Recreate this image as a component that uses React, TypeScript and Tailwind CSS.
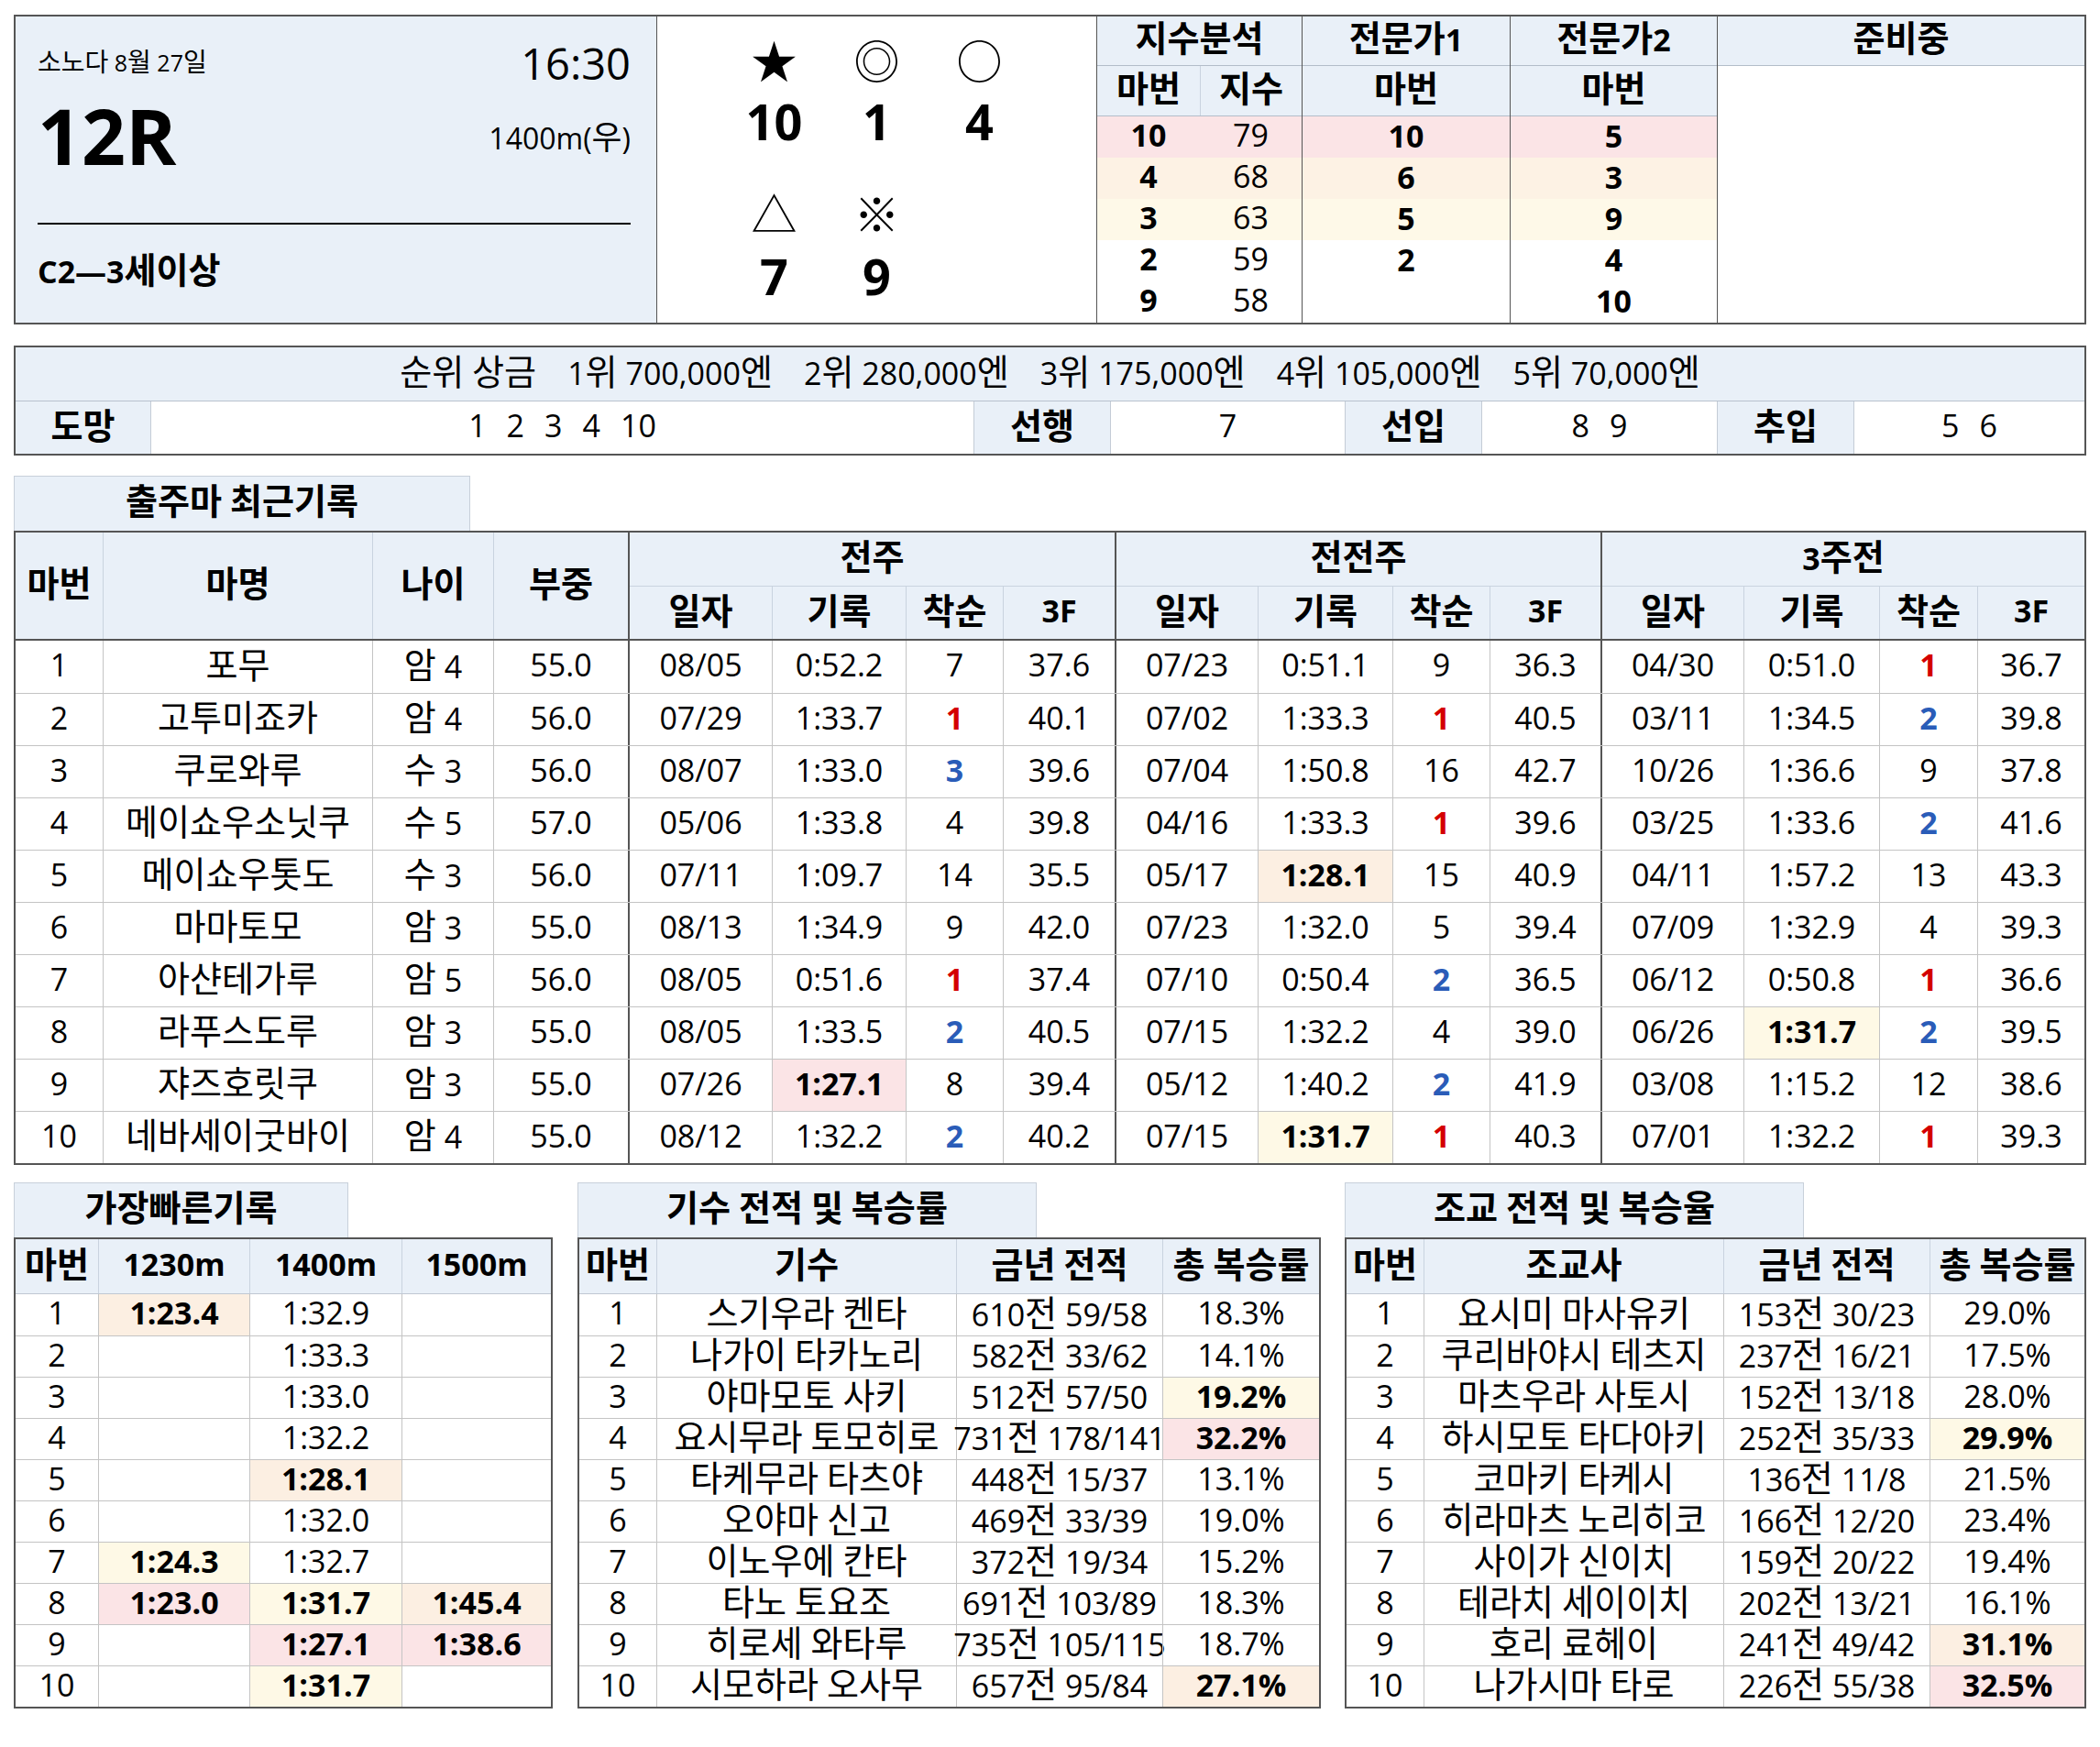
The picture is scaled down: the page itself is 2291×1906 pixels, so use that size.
import React from "react";

type Hl = "" | "p" | "o" | "y";
const hl = (h?: Hl) =>
  h === "p" ? "bg-[#fbe4e6] font-bold" : h === "o" ? "bg-[#fcefe2] font-bold" : h === "y" ? "bg-[#fef9e6] font-bold" : "";

const HDR = "bg-[#e9f0f8]";

// Hangul runs are rendered slightly larger, as in the reference font
function K({ t }: { t: string }) {
  const parts = t.split(/([\uAC00-\uD7A3\u3131-\u318E]+)/);
  return (
    <span className="whitespace-pre leading-none">
      {parts.map((p, i) =>
        i % 2 === 1 ? (
          <span key={i} className="text-[1.12em]">
            {p}
          </span>
        ) : (
          <React.Fragment key={i}>{p}</React.Fragment>
        )
      )}
    </span>
  );
}

type Race = { d: string; t: string; h?: Hl; r: string; f: string };
type Horse = { no: string; name: string; age: string; wt: string; races: Race[] };

const horses: Horse[] = [
  { no: "1", name: "포무", age: "암 4", wt: "55.0", races: [
    { d: "08/05", t: "0:52.2", r: "7", f: "37.6" },
    { d: "07/23", t: "0:51.1", r: "9", f: "36.3" },
    { d: "04/30", t: "0:51.0", r: "1", f: "36.7" } ] },
  { no: "2", name: "고투미죠카", age: "암 4", wt: "56.0", races: [
    { d: "07/29", t: "1:33.7", r: "1", f: "40.1" },
    { d: "07/02", t: "1:33.3", r: "1", f: "40.5" },
    { d: "03/11", t: "1:34.5", r: "2", f: "39.8" } ] },
  { no: "3", name: "쿠로와루", age: "수 3", wt: "56.0", races: [
    { d: "08/07", t: "1:33.0", r: "3", f: "39.6" },
    { d: "07/04", t: "1:50.8", r: "16", f: "42.7" },
    { d: "10/26", t: "1:36.6", r: "9", f: "37.8" } ] },
  { no: "4", name: "메이쇼우소닛쿠", age: "수 5", wt: "57.0", races: [
    { d: "05/06", t: "1:33.8", r: "4", f: "39.8" },
    { d: "04/16", t: "1:33.3", r: "1", f: "39.6" },
    { d: "03/25", t: "1:33.6", r: "2", f: "41.6" } ] },
  { no: "5", name: "메이쇼우톳도", age: "수 3", wt: "56.0", races: [
    { d: "07/11", t: "1:09.7", r: "14", f: "35.5" },
    { d: "05/17", t: "1:28.1", h: "o", r: "15", f: "40.9" },
    { d: "04/11", t: "1:57.2", r: "13", f: "43.3" } ] },
  { no: "6", name: "마마토모", age: "암 3", wt: "55.0", races: [
    { d: "08/13", t: "1:34.9", r: "9", f: "42.0" },
    { d: "07/23", t: "1:32.0", r: "5", f: "39.4" },
    { d: "07/09", t: "1:32.9", r: "4", f: "39.3" } ] },
  { no: "7", name: "아샨테가루", age: "암 5", wt: "56.0", races: [
    { d: "08/05", t: "0:51.6", r: "1", f: "37.4" },
    { d: "07/10", t: "0:50.4", r: "2", f: "36.5" },
    { d: "06/12", t: "0:50.8", r: "1", f: "36.6" } ] },
  { no: "8", name: "라푸스도루", age: "암 3", wt: "55.0", races: [
    { d: "08/05", t: "1:33.5", r: "2", f: "40.5" },
    { d: "07/15", t: "1:32.2", r: "4", f: "39.0" },
    { d: "06/26", t: "1:31.7", h: "y", r: "2", f: "39.5" } ] },
  { no: "9", name: "쟈즈호릿쿠", age: "암 3", wt: "55.0", races: [
    { d: "07/26", t: "1:27.1", h: "p", r: "8", f: "39.4" },
    { d: "05/12", t: "1:40.2", r: "2", f: "41.9" },
    { d: "03/08", t: "1:15.2", r: "12", f: "38.6" } ] },
  { no: "10", name: "네바세이굿바이", age: "암 4", wt: "55.0", races: [
    { d: "08/12", t: "1:32.2", r: "2", f: "40.2" },
    { d: "07/15", t: "1:31.7", h: "y", r: "1", f: "40.3" },
    { d: "07/01", t: "1:32.2", r: "1", f: "39.3" } ] },
];

const groupW = [
  ["w-[157px]", "w-[146px]", "w-[106px]", "w-[122px]"],
  ["w-[156px]", "w-[147px]", "w-[106px]", "w-[121px]"],
  ["w-[156px]", "w-[148px]", "w-[107px]", "flex-1"],
];
const groupHeadW = ["w-[531px]", "w-[530px]", "flex-1"];
const groupSubW = [
  ["w-[155px]", "w-[146px]", "w-[106px]", "flex-1"],
  ["w-[154px]", "w-[147px]", "w-[106px]", "flex-1"],
  ["w-[154px]", "w-[148px]", "w-[107px]", "flex-1"],
];
const groupNames = ["전주", "전전주", "3주전"];

const rankCls = (r: string) =>
  r === "1" ? "text-[#d40000] font-bold" : r === "2" || r === "3" ? "text-[#2a5cb8] font-bold" : "";

const fastest: [string, Hl, string, Hl, string, Hl][] = [
  ["1:23.4", "o", "1:32.9", "", "", ""],
  ["", "", "1:33.3", "", "", ""],
  ["", "", "1:33.0", "", "", ""],
  ["", "", "1:32.2", "", "", ""],
  ["", "", "1:28.1", "o", "", ""],
  ["", "", "1:32.0", "", "", ""],
  ["1:24.3", "y", "1:32.7", "", "", ""],
  ["1:23.0", "p", "1:31.7", "y", "1:45.4", "o"],
  ["", "", "1:27.1", "p", "1:38.6", "p"],
  ["", "", "1:31.7", "y", "", ""],
];

const jockeys: [string, string, string, Hl][] = [
  ["스기우라 켄타", "610전 59/58", "18.3%", ""],
  ["나가이 타카노리", "582전 33/62", "14.1%", ""],
  ["야마모토 사키", "512전 57/50", "19.2%", "y"],
  ["요시무라 토모히로", "731전 178/141", "32.2%", "p"],
  ["타케무라 타츠야", "448전 15/37", "13.1%", ""],
  ["오야마 신고", "469전 33/39", "19.0%", ""],
  ["이노우에 칸타", "372전 19/34", "15.2%", ""],
  ["타노 토요조", "691전 103/89", "18.3%", ""],
  ["히로세 와타루", "735전 105/115", "18.7%", ""],
  ["시모하라 오사무", "657전 95/84", "27.1%", "o"],
];

const trainers: [string, string, string, Hl][] = [
  ["요시미 마사유키", "153전 30/23", "29.0%", ""],
  ["쿠리바야시 테츠지", "237전 16/21", "17.5%", ""],
  ["마츠우라 사토시", "152전 13/18", "28.0%", ""],
  ["하시모토 타다아키", "252전 35/33", "29.9%", "y"],
  ["코마키 타케시", "136전 11/8", "21.5%", ""],
  ["히라마츠 노리히코", "166전 12/20", "23.4%", ""],
  ["사이가 신이치", "159전 20/22", "19.4%", ""],
  ["테라치 세이이치", "202전 13/21", "16.1%", ""],
  ["호리 료헤이", "241전 49/42", "31.1%", "o"],
  ["나가시마 타로", "226전 55/38", "32.5%", "p"],
];

const idxRows: { a: string; b: string; c: string; d: string; bg: string }[] = [
  { a: "10", b: "79", c: "10", d: "5", bg: "bg-[#fbe4e6]" },
  { a: "4", b: "68", c: "6", d: "3", bg: "bg-[#fdf2e4]" },
  { a: "3", b: "63", c: "5", d: "9", bg: "bg-[#fef9e8]" },
  { a: "2", b: "59", c: "2", d: "4", bg: "" },
  { a: "9", b: "58", c: "", d: "10", bg: "" },
];

function Cell({ w, cls = "", children }: { w: string; cls?: string; children?: React.ReactNode }) {
  return (
    <div className={`${w} shrink-0 h-full flex items-center justify-center whitespace-nowrap pb-[5px] ${cls}`}>
      {typeof children === "string" ? <K t={children} /> : children}
    </div>
  );
}

function Head({ cls, children }: { cls: string; children: string }) {
  return (
    <div className={`${cls} flex items-center justify-center font-bold whitespace-nowrap pb-[6px]`}>
      <K t={children} />
    </div>
  );
}

function Num({ cls, children }: { cls: string; children: string }) {
  return (
    <div className={`${cls} flex items-center justify-center font-bold leading-none pb-[4px]`}>{children}</div>
  );
}

function TopBox() {
  return (
    <div className="mt-[16px] flex h-[338px] border-2 border-[#555]">
      {/* left info */}
      <div className={`w-[700px] shrink-0 border-r border-[#555] ${HDR} pl-[24px] pr-[28px] pt-[21px] flex flex-col`}>
        <div className="h-[60px] flex items-center justify-between">
          <span className="text-[25px]"><K t="소노다 8월 27일" /></span>
          <span className="text-[47px] leading-none">16:30</span>
        </div>
        <div className="h-[98px] flex items-center justify-between">
          <span className="text-[84px] font-bold leading-none">12R</span>
          <span className="text-[32px] leading-none pt-[4px]"><K t="1400m(우)" /></span>
        </div>
        <div className="mt-[46px] h-[2px] bg-black" />
        <div className="flex-1 flex items-center pb-[4px]">
          <span className="text-[34px] font-bold"><K t="C2—3세이상" /></span>
        </div>
      </div>
      {/* marks */}
      <div className="w-[480px] shrink-0 border-r border-[#555] flex flex-col items-center pt-[21px]">
        <div className="grid grid-cols-[112px_112px_112px] h-[56px] text-[50px] leading-none items-center justify-items-center">
          <span>★</span>
          <span>◎</span>
          <span>○</span>
        </div>
        <div className="mt-[5px] grid grid-cols-[112px_112px_112px] h-[64px] text-[54px] font-bold leading-none items-center justify-items-center">
          <span>10</span>
          <span>1</span>
          <span>4</span>
        </div>
        <div className="mt-[42px] grid grid-cols-[112px_112px_112px] h-[56px] text-[50px] leading-none items-center justify-items-center">
          <span>△</span>
          <span>※</span>
          <span />
        </div>
        <div className="mt-[7px] grid grid-cols-[112px_112px_112px] h-[64px] text-[54px] font-bold leading-none items-center justify-items-center">
          <span>7</span>
          <span>9</span>
          <span />
        </div>
      </div>
      {/* 지수분석 */}
      <div className="w-[224px] shrink-0 border-r border-[#555] flex flex-col text-[34px]">
        <Head cls={`h-[54px] ${HDR} border-b border-[#b3bdc9]`}>지수분석</Head>
        <div className={`h-[55px] ${HDR} border-b border-[#b3bdc9] flex font-bold`}>
          <Cell w="w-[112px]">마번</Cell>
          <Cell w="flex-1" cls="border-l border-[#c9d3df]">지수</Cell>
        </div>
        {idxRows.map((r, i) => (
          <div key={i} className={`h-[45px] flex ${r.bg}`}>
            <Cell w="w-[112px]" cls="font-bold">{r.a}</Cell>
            <Cell w="flex-1">{r.b}</Cell>
          </div>
        ))}
      </div>
      {/* 전문가1 */}
      <div className="w-[227px] shrink-0 border-r border-[#555] flex flex-col text-[34px]">
        <Head cls={`h-[54px] ${HDR} border-b border-[#b3bdc9]`}>전문가1</Head>
        <Head cls={`h-[55px] ${HDR} border-b border-[#b3bdc9]`}>마번</Head>
        {idxRows.map((r, i) => (
          <Num key={i} cls={`h-[45px] ${r.bg}`}>{r.c}</Num>
        ))}
      </div>
      {/* 전문가2 */}
      <div className="w-[226px] shrink-0 border-r border-[#555] flex flex-col text-[34px]">
        <Head cls={`h-[54px] ${HDR} border-b border-[#b3bdc9]`}>전문가2</Head>
        <Head cls={`h-[55px] ${HDR} border-b border-[#b3bdc9]`}>마번</Head>
        {idxRows.map((r, i) => (
          <Num key={i} cls={`h-[45px] ${r.bg}`}>{r.d}</Num>
        ))}
      </div>
      {/* 준비중 */}
      <div className="flex-1 flex flex-col text-[34px]">
        <Head cls={`h-[54px] ${HDR} border-b border-[#b3bdc9]`}>준비중</Head>
        <div className="flex-1 bg-white" />
      </div>
    </div>
  );
}

function PrizeBox() {
  const prizes = ["1위 700,000엔", "2위 280,000엔", "3위 175,000엔", "4위 105,000엔", "5위 70,000엔"];
  const nums = (arr: string[]) => (
    <div className="flex gap-[22px] leading-none">
      {arr.map((n, i) => (
        <span key={i}>{n}</span>
      ))}
    </div>
  );
  return (
    <div className="mt-[23px] h-[120px] border-2 border-[#555] flex flex-col text-[34px]">
      <div className={`h-[59px] ${HDR} border-b border-[#b8c2ce] flex items-center justify-center gap-[34px] whitespace-nowrap pb-[5px]`}>
        <K t="순위 상금" />
        {prizes.map((p) => (
          <K key={p} t={p} />
        ))}
      </div>
      <div className="flex-1 flex">
        <Cell w="w-[147px]" cls={`${HDR} font-bold`}>도망</Cell>
        <Cell w="w-[898px]" cls="border-l border-[#c4ccd6]">{nums(["1", "2", "3", "4", "10"])}</Cell>
        <Cell w="w-[149px]" cls={`${HDR} font-bold border-l border-[#c4ccd6]`}>선행</Cell>
        <Cell w="w-[256px]" cls="border-l border-[#c4ccd6]">{nums(["7"])}</Cell>
        <Cell w="w-[149px]" cls={`${HDR} font-bold border-l border-[#c4ccd6]`}>선입</Cell>
        <Cell w="w-[257px]" cls="border-l border-[#c4ccd6]">{nums(["8", "9"])}</Cell>
        <Cell w="w-[149px]" cls={`${HDR} font-bold border-l border-[#c4ccd6]`}>추입</Cell>
        <Cell w="flex-1" cls="border-l border-[#c4ccd6]">{nums(["5", "6"])}</Cell>
      </div>
    </div>
  );
}

function Tab({ w, children, mt }: { w: string; children: string; mt: string }) {
  return (
    <div className={`${w} ${mt} h-[60px] ${HDR} border-t border-x border-[#c8d0da] flex items-center justify-center font-bold text-[34px] whitespace-nowrap pb-[6px]`}>
      <K t={children} />
    </div>
  );
}

function MainTable() {
  const HL = "border-l border-[#c9d3df]";
  const DL = "border-l border-[#c4c4c4]";
  return (
    <div className="border-2 border-[#555] text-[34px]">
      <div className={`flex h-[118px] border-b-2 border-[#555] ${HDR} font-bold`}>
        <Cell w="w-[95px]">마번</Cell>
        <Cell w="w-[294px]" cls={HL}>마명</Cell>
        <Cell w="w-[132px]" cls={HL}>나이</Cell>
        <Cell w="w-[147px]" cls={HL}>부중</Cell>
        {groupNames.map((g, gi) => (
          <div key={g} className={`${groupHeadW[gi]} shrink-0 border-l-2 border-[#555] flex flex-col`}>
            <Head cls="h-[58px]">{g}</Head>
            <div className="flex-1 flex border-t border-[#c9d3df]">
              {["일자", "기록", "착순", "3F"].map((s, si) => (
                <Cell key={s} w={groupSubW[gi][si]} cls={si > 0 ? HL : ""}>{s}</Cell>
              ))}
            </div>
          </div>
        ))}
      </div>
      {horses.map((h, i) => (
        <div key={h.no} className={`flex h-[57px] ${i > 0 ? "border-t border-[#c4c4c4]" : ""}`}>
          <Cell w="w-[95px]">{h.no}</Cell>
          <Cell w="w-[294px]" cls={DL}>{h.name}</Cell>
          <Cell w="w-[132px]" cls={DL}>{h.age}</Cell>
          <Cell w="w-[147px]" cls={DL}>{h.wt}</Cell>
          {h.races.map((r, gi) => (
            <React.Fragment key={gi}>
              <Cell w={groupW[gi][0]} cls="border-l-2 border-[#555]">{r.d}</Cell>
              <Cell w={groupW[gi][1]} cls={`${DL} ${hl(r.h)}`}>{r.t}</Cell>
              <Cell w={groupW[gi][2]} cls={`${DL} ${rankCls(r.r)}`}>{r.r}</Cell>
              <Cell w={groupW[gi][3]} cls={DL}>{r.f}</Cell>
            </React.Fragment>
          ))}
        </div>
      ))}
    </div>
  );
}

function SmallTable({ widths, heads, rows }: { widths: string[]; heads: string[]; rows: { v: string; h?: Hl }[][] }) {
  return (
    <div className="border-2 border-[#555] text-[34px]">
      <div className={`flex h-[60px] ${HDR} border-b border-[#c0c8d2] font-bold`}>
        {heads.map((h, i) => (
          <Cell key={h} w={widths[i]} cls={i > 0 ? "border-l border-[#c9d3df]" : ""}>{h}</Cell>
        ))}
      </div>
      {rows.map((r, ri) => (
        <div key={ri} className={`flex h-[45px] ${ri > 0 ? "border-t border-[#c4c4c4]" : ""}`}>
          {r.map((c, ci) => (
            <Cell key={ci} w={widths[ci]} cls={`${ci > 0 ? "border-l border-[#c4c4c4]" : ""} ${hl(c.h)}`}>{c.v}</Cell>
          ))}
        </div>
      ))}
    </div>
  );
}

export default function App() {
  return (
    <div className="w-[2291px] h-[1906px] bg-white text-black px-[15px] font-['Open_Sans','Noto_Sans_CJK_KR',sans-serif]">
      <TopBox />
      <PrizeBox />
      <Tab w="w-[498px]" mt="mt-[22px]">출주마 최근기록</Tab>
      <MainTable />
      <div className="mt-[19px] flex items-start">
        <div className="w-[588px] shrink-0">
          <Tab w="w-[365px]" mt="mt-0">가장빠른기록</Tab>
          <SmallTable
            widths={["w-[90px]", "w-[165px]", "w-[166px]", "flex-1"]}
            heads={["마번", "1230m", "1400m", "1500m"]}
            rows={fastest.map((f, i) => [
              { v: String(i + 1) },
              { v: f[0], h: f[1] },
              { v: f[2], h: f[3] },
              { v: f[4], h: f[5] },
            ])}
          />
        </div>
        <div className="ml-[27px] w-[811px] shrink-0">
          <Tab w="w-[501px]" mt="mt-0">기수 전적 및 복승률</Tab>
          <SmallTable
            widths={["w-[84px]", "w-[327px]", "w-[225px]", "flex-1"]}
            heads={["마번", "기수", "금년 전적", "총 복승률"]}
            rows={jockeys.map((j, i) => [{ v: String(i + 1) }, { v: j[0] }, { v: j[1] }, { v: j[2], h: j[3] }])}
          />
        </div>
        <div className="ml-[26px] w-[809px] shrink-0">
          <Tab w="w-[501px]" mt="mt-0">조교 전적 및 복승율</Tab>
          <SmallTable
            widths={["w-[84px]", "w-[327px]", "w-[225px]", "flex-1"]}
            heads={["마번", "조교사", "금년 전적", "총 복승률"]}
            rows={trainers.map((j, i) => [{ v: String(i + 1) }, { v: j[0] }, { v: j[1] }, { v: j[2], h: j[3] }])}
          />
        </div>
      </div>
    </div>
  );
}
